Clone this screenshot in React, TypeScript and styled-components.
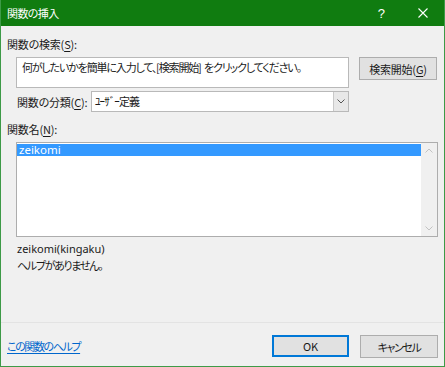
import styled, { createGlobalStyle } from 'styled-components'

const GlobalStyle = createGlobalStyle`
    html, body {
        margin: 0;
        padding: 0;
        background: #f0f0f0;
    }
    * {
        box-sizing: border-box;
    }
`

const font = `"Noto Sans CJK JP", "Noto Sans", sans-serif`

const Window = styled.div`
    width: 445px;
    height: 367px;
    display: flex;
    flex-direction: column;
    background: #f0f0f0;
    border: 1px solid #3d9a47;
    border-top: none;
    font-family: ${font};
    font-size: 11px;
    font-feature-settings: "palt";
    color: #1a1a1a;
    overflow: hidden;
`

const TitleBar = styled.div`
    height: 26px;
    margin: 0 -1px;
    background: #107c10;
    color: #ffffff;
    display: flex;
    align-items: center;
    padding-left: 7px;
    font-size: 11px;
    letter-spacing: -0.6px;
`

const TitleText = styled.span`
    flex: 1;
`

const TitleButton = styled.span<{ width: number }>`
    width: ${(p) => p.width}px;
    display: flex;
    justify-content: center;
    align-items: center;
    font-size: 13px;
    font-family: "Liberation Sans", sans-serif;
`

const Body = styled.div`
    flex: 1;
    display: flex;
    flex-direction: column;
    padding: 0 6px;
`

const Label = styled.div<{ top: number }>`
    margin-top: ${(p) => p.top}px;
    height: 16px;
    line-height: 16px;
    white-space: nowrap;
    letter-spacing: -0.2px;
`

const Key = styled.span`
    text-decoration: underline;
    text-underline-offset: 2px;
`

const SearchRow = styled.div`
    display: flex;
    align-items: flex-start;
    margin-top: 5px;
    margin-left: 9px;
`

const SearchBox = styled.div`
    width: 333px;
    height: 31px;
    background: #ffffff;
    border: 1px solid #b9b9b9;
    padding: 1px 0 0 5px;
    line-height: 16px;
    white-space: nowrap;
    letter-spacing: -1.15px;
    word-spacing: 2px;
    color: #222;
`

const Button = styled.div<{ primary?: boolean; left: number; tight?: boolean }>`
    width: ${(p) => (p.primary ? 77 : 78)}px;
    height: ${(p) => (p.primary ? 22 : 23)}px;
    margin-left: ${(p) => p.left}px;
    background: #e1e1e1;
    border: 1px solid ${(p) => (p.primary ? '#0078d7' : '#adadad')};
    box-shadow: ${(p) => (p.primary ? 'inset 0 0 0 1px #0078d7' : 'none')};
    display: flex;
    align-items: center;
    justify-content: center;
    letter-spacing: ${(p) => (p.tight ? '-1.4px' : '-0.2px')};
    white-space: nowrap;
`

const CategoryRow = styled.div`
    display: flex;
    align-items: center;
    margin-top: 3px;
    margin-left: 10px;
    height: 21px;
`

const CategoryLabel = styled.span`
    width: 74px;
    white-space: nowrap;
    letter-spacing: -0.2px;
`

const Select = styled.div`
    width: 258px;
    height: 21px;
    background: #ffffff;
    border: 1px solid #b9b9b9;
    display: flex;
    align-items: stretch;
`

const SelectValue = styled.span`
    flex: 1;
    padding-left: 3px;
    line-height: 19px;
    letter-spacing: -0.9px;
`

const SelectArrow = styled.span`
    width: 15px;
    background: #e8e8e8;
    border-left: 1px solid #c9c9c9;
    display: flex;
    align-items: center;
    justify-content: center;
`

const ListBox = styled.div`
    width: 422px;
    height: 95px;
    margin-top: 5px;
    margin-left: 9px;
    background: #ffffff;
    border: 1px solid #adadad;
    display: flex;
`

const ListItems = styled.div`
    flex: 1;
    padding-top: 1px;
`

const ListItem = styled.div<{ selected?: boolean }>`
    height: 12px;
    line-height: 12px;
    padding-left: 2px;
    font-family: "Noto Sans", sans-serif;
    font-size: 11.5px;
    background: ${(p) => (p.selected ? '#3399ff' : 'transparent')};
    color: ${(p) => (p.selected ? '#ffffff' : '#1a1a1a')};
`

const ScrollBar = styled.div`
    width: 16px;
    background: #f0f0f0;
    display: flex;
    flex-direction: column;
    justify-content: space-between;
    align-items: center;
    padding: 5px 0;
`

const Info = styled.div<{ top: number; latin?: boolean }>`
    margin-top: ${(p) => p.top}px;
    margin-left: 10px;
    height: 16px;
    line-height: 16px;
    font-family: ${(p) => (p.latin ? `"Noto Sans", sans-serif` : font)};
    font-size: 11px;
    letter-spacing: ${(p) => (p.latin ? '0' : '-1.3px')};
`

const Separator = styled.div`
    margin: auto -6px 0;
    height: 1px;
    background: #e3e3e3;
`

const Footer = styled.div`
    display: flex;
    align-items: flex-start;
    height: 43px;
    padding-top: 12px;
`

const HelpLink = styled.a`
    flex: 1;
    margin-top: 3px;
    color: #0066cc;
    text-decoration: underline;
    text-underline-offset: 2px;
    letter-spacing: -1.4px;
    cursor: pointer;
`

const Chevron = ({ up, color = '#9a9a9a' }: { up?: boolean; color?: string }) => (
    <svg width="8" height="5" viewBox="0 0 8 5">
        <path
            d={up ? 'M0.5 4.5 L4 1 L7.5 4.5' : 'M0.5 0.5 L4 4 L7.5 0.5'}
            fill="none"
            stroke={color}
            strokeWidth="1"
        />
    </svg>
)

export default function App() {
    return (
        <>
            <GlobalStyle />
            <Window>
                <TitleBar>
                    <TitleText>関数の挿入</TitleText>
                    <TitleButton width={40}>?</TitleButton>
                    <TitleButton width={44}>
                        <svg width="10" height="10" viewBox="0 0 10 10">
                            <path d="M0.5 0.5 L9.5 9.5 M9.5 0.5 L0.5 9.5" stroke="#fff" strokeWidth="1.1" />
                        </svg>
                    </TitleButton>
                </TitleBar>
                <Body>
                    <Label top={10}>
                        関数の検索(<Key>S</Key>):
                    </Label>
                    <SearchRow>
                        <SearchBox>何がしたいかを簡単に入力して、[検索開始] をクリックしてください。</SearchBox>
                        <Button left={10}>
                            検索開始(<Key>G</Key>)
                        </Button>
                    </SearchRow>
                    <CategoryRow>
                        <CategoryLabel>
                            関数の分類(<Key>C</Key>):
                        </CategoryLabel>
                        <Select>
                            <SelectValue>ﾕｰｻﾞｰ定義</SelectValue>
                            <SelectArrow>
                                <Chevron color="#555" />
                            </SelectArrow>
                        </Select>
                    </CategoryRow>
                    <Label top={9}>
                        関数名(<Key>N</Key>):
                    </Label>
                    <ListBox>
                        <ListItems>
                            <ListItem selected>zeikomi</ListItem>
                        </ListItems>
                        <ScrollBar>
                            <Chevron up color="#c2c2c2" />
                            <Chevron color="#c2c2c2" />
                        </ScrollBar>
                    </ListBox>
                    <Info top={4} latin>zeikomi(kingaku)</Info>
                    <Info top={0}>ヘルプがありません。</Info>
                    <Separator />
                    <Footer>
                        <HelpLink>この関数のヘルプ</HelpLink>
                        <Button primary left={0}>OK</Button>
                        <Button left={11} tight>キャンセル</Button>
                    </Footer>
                </Body>
            </Window>
        </>
    )
}
